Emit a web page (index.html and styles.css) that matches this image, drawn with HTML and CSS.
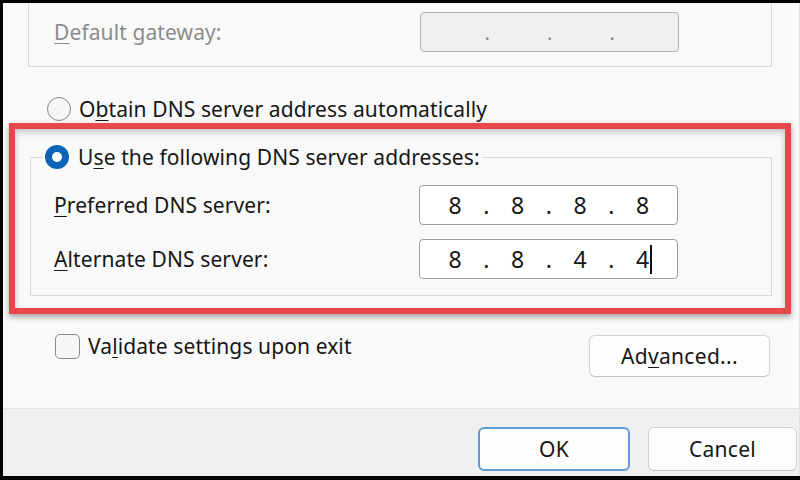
FILE: index.html
```html
<!DOCTYPE html>
<html lang="en">
<head>
<meta charset="utf-8">
<title>DNS settings</title>
<link rel="stylesheet" href="styles.css">
</head>
<body>
<div class="window">
  <div class="main">
    <div class="group group-top">
      <div class="field-row">
        <span class="label disabled"><u>D</u>efault gateway:</span>
        <div class="ipbox ipbox-disabled">
          <span class="seg"></span><span class="dot">.</span>
          <span class="seg"></span><span class="dot">.</span>
          <span class="seg"></span><span class="dot">.</span>
          <span class="seg"></span>
        </div>
      </div>
    </div>

    <div class="radio-row">
      <span class="radio"></span>
      <span class="text">O<u>b</u>tain DNS server address automatically</span>
    </div>

    <div class="highlight">
      <fieldset class="group group-dns">
        <legend class="legend">
          <span class="radio radio-on"></span>
          <span class="text">U<u>s</u>e the following DNS server addresses:</span>
        </legend>
        <div class="field-row">
          <span class="label"><u>P</u>referred DNS server:</span>
          <div class="ipbox">
            <span class="seg">8</span><span class="dot">.</span>
            <span class="seg">8</span><span class="dot">.</span>
            <span class="seg">8</span><span class="dot">.</span>
            <span class="seg">8</span>
          </div>
        </div>
        <div class="field-row">
          <span class="label"><u>A</u>lternate DNS server:</span>
          <div class="ipbox">
            <span class="seg">8</span><span class="dot">.</span>
            <span class="seg">8</span><span class="dot">.</span>
            <span class="seg">4</span><span class="dot">.</span>
            <span class="seg"><span class="caret">4</span></span>
          </div>
        </div>
      </fieldset>
    </div>

    <div class="options-row">
      <div class="check-row">
        <span class="checkbox"></span>
        <span class="text">Va<u>l</u>idate settings upon exit</span>
      </div>
      <button class="btn btn-advanced">Ad<u>v</u>anced...</button>
    </div>
  </div>

  <div class="footer">
    <button class="btn btn-ok">OK</button>
    <button class="btn btn-cancel">Cancel</button>
  </div>
</div>
</body>
</html>
```

FILE: styles.css
```css
* { box-sizing: border-box; }

html, body {
  margin: 0;
  padding: 0;
  background: #000;
  width: 800px;
  height: 480px;
  overflow: hidden;
}

body {
  font-family: "Noto Sans", "Open Sans", sans-serif;
  font-size: 21px;
  color: #161616;
}

u {
  text-decoration-thickness: 1px;
  text-underline-offset: 3px;
}

.window {
  margin: 3px 0 0 3px;
  width: 797px;
  height: 473px;
  background: #f9f9f9;
  display: flex;
  flex-direction: column;
  overflow: hidden;
  border-right: 1px solid #e2e2e2;
}

.main {
  height: 405px;
  padding-left: 25px;
}

.group {
  border: 1px solid #d9d9d9;
}

.group-top {
  width: 744px;
  border-top: none;
  padding: 9px 92px 14px 25px;
}

.field-row {
  display: flex;
  align-items: center;
  justify-content: space-between;
  height: 40px;
}

.label { white-space: nowrap; letter-spacing: 0.1px; }
.disabled { color: #8c8c8c; }

.ipbox {
  width: 259px;
  height: 40px;
  border: 1px solid #9e9e9e;
  border-radius: 4px;
  background: #fff;
  display: flex;
  align-items: center;
  padding-left: 16px;
  font-size: 23px;
}

.ipbox-disabled {
  background: #f0f0f0;
  border-color: #b3b3b3;
  color: #8a8a8a;
  font-size: 20px;
}

.seg {
  width: 38px;
  text-align: center;
}

.dot {
  width: 24.5px;
  text-align: center;
}

.caret { position: relative; }
.caret::after {
  content: "";
  position: absolute;
  right: -3px;
  top: 2px;
  bottom: 1px;
  width: 2px;
  background: #111;
}

.radio-row {
  display: flex;
  align-items: center;
  height: 30px;
  margin-top: 27px;
  margin-left: 19px;
  gap: 8px;
}

.text { white-space: nowrap; letter-spacing: 0.1px; }

.radio {
  width: 24px;
  height: 24px;
  border-radius: 50%;
  border: 1.5px solid #858585;
  background: #f6f6f6;
  flex: none;
}

.radio-on {
  border: none;
  background: #0b64b8;
  display: flex;
  align-items: center;
  justify-content: center;
}

.radio-on::before {
  content: "";
  width: 10px;
  height: 10px;
  border-radius: 50%;
  background: #fff;
}

.highlight {
  margin-left: -19px;
  margin-top: -1px;
  width: 782px;
  border: 6px solid #e8474c;
  padding: 13px 0 12px 15px;
  box-shadow: 0 3px 6px rgba(0, 0, 0, 0.35), inset 0 3px 6px rgba(0, 0, 0, 0.22);
}

.group-dns {
  margin: 0;
  width: 742px;
  min-width: 0;
  padding: 0 93px 16px 23px;
}

.legend {
  display: flex;
  align-items: center;
  gap: 9px;
  height: 30px;
  padding: 0 2px;
  margin-left: -11px;
}

.group-dns .field-row:first-of-type { margin-top: 13px; }
.group-dns .field-row + .field-row { margin-top: 14px; }

.options-row {
  width: 742px;
  margin-top: 18px;
  display: flex;
  justify-content: space-between;
  align-items: flex-start;
}

.check-row {
  display: flex;
  align-items: center;
  gap: 8px;
  margin-left: 27px;
  height: 28px;
}

.checkbox {
  width: 25px;
  height: 25px;
  border: 1.5px solid #8a8a8a;
  border-radius: 5px;
  background: #f6f6f6;
  flex: none;
}

.btn {
  font-family: inherit;
  font-size: 21px;
  color: #161616;
  background: #fdfdfd;
  border: 1px solid #d2d2d2;
  border-bottom-color: #c2c2c2;
  border-radius: 6px;
  padding: 0;
  letter-spacing: 0.3px;
}

.btn-advanced {
  width: 181px;
  height: 42px;
  margin-top: 3px;
}

.footer {
  flex: 1;
  border-top: 1px solid #e3e3e3;
  background: #f0f0f0;
  display: flex;
  justify-content: flex-end;
  align-items: flex-start;
  padding: 18px 2px 0 0;
  gap: 18px;
}

.btn-ok {
  width: 152px;
  height: 44px;
  border: 2px solid #5f9bd3;
}

.btn-cancel {
  width: 149px;
  height: 44px;
}
```
